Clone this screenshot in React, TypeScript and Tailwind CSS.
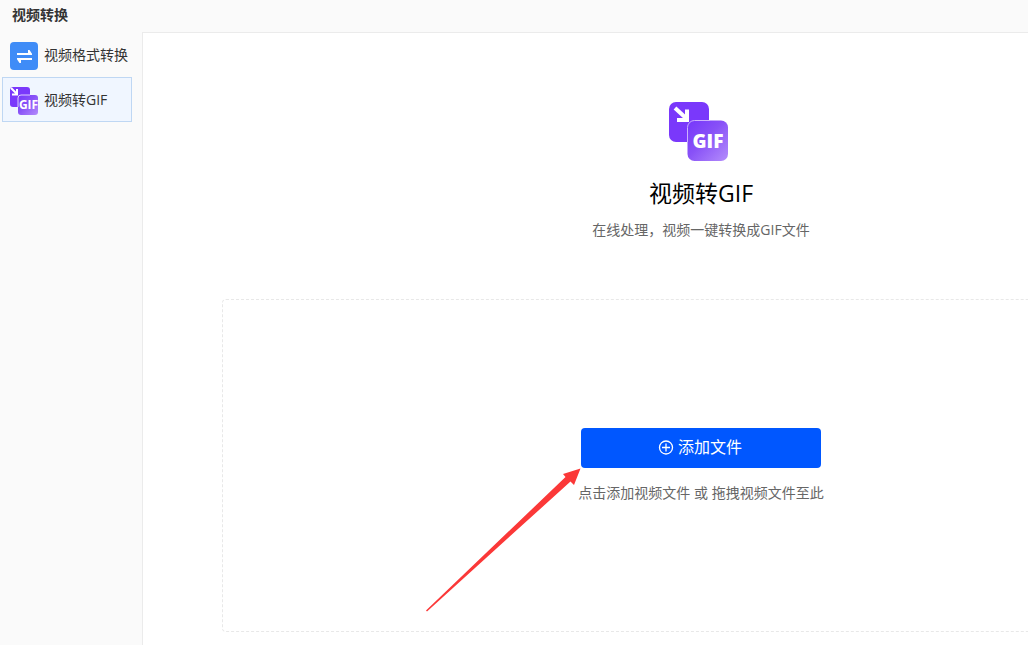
import { useRef, useState } from "react";

type Tool = "format" | "gif";

export default function App() {
  const [tool, setTool] = useState<Tool>("gif");

  return (
    <div className="flex min-h-screen flex-col overflow-hidden bg-[#fafafa] font-['Open_Sans','Noto_Sans_CJK_SC',sans-serif] text-sm text-[#333]">
      <header className="flex h-8 items-center px-3 pb-0.5">
        <h1 className="font-semibold leading-5">视频转换</h1>
      </header>
      <div className="flex flex-1">
        <nav className="w-[142px] shrink-0 pl-0.5 pr-2.5">
          <NavItem label="视频格式转换" active={tool === "format"} onClick={() => setTool("format")}>
            <ConvertIcon />
          </NavItem>
          <NavItem label="视频转GIF" active={tool === "gif"} onClick={() => setTool("gif")}>
            <SmallGifIcon />
          </NavItem>
        </nav>
        <GifPanel />
      </div>
    </div>
  );
}

function NavItem({
  label,
  active,
  onClick,
  children,
}: {
  label: string;
  active: boolean;
  onClick: () => void;
  children: React.ReactNode;
}) {
  return (
    <button
      type="button"
      onClick={onClick}
      className={`flex h-[45px] w-full items-center gap-1.5 whitespace-nowrap border pl-[7px] pt-[3px] leading-[22px] ${
        active ? "border-[#bfd7f3] bg-[#f0f6ff]" : "border-transparent"
      }`}
    >
      {children}
      <span className="pb-0.5">{label}</span>
    </button>
  );
}

function GifPanel() {
  const input = useRef<HTMLInputElement>(null);

  return (
    <main className="flex min-w-[1117px] flex-1 flex-col border-l border-t border-[#ebebeb] bg-white px-[79px] pb-[13px]">
      <div className="flex flex-col items-center pt-[69px]">
        <GifIcon />
        <h2 className="mt-[15px] text-[23px] leading-8 text-black">视频转GIF</h2>
        <p className="mt-[11px] leading-5 text-[#666]">在线处理，视频一键转换成GIF文件</p>
      </div>
      <section className="mt-[59px] flex flex-1 flex-col items-center justify-center rounded border border-dashed border-[#e8e8e8] py-10">
        <div className="relative">
          <button
            type="button"
            onClick={() => input.current?.click()}
            className="flex h-10 w-60 items-center justify-center gap-1 rounded bg-[#0057ff] pb-px pr-0.5 text-base text-white"
          >
            <PlusIcon />
            添加文件
          </button>
          <Arrow />
        </div>
        <input ref={input} type="file" accept="video/*" aria-label="添加文件" className="hidden" />
        <p className="mt-[15px] pb-px leading-5 text-[#666]">点击添加视频文件 或 拖拽视频文件至此</p>
      </section>
    </main>
  );
}

function ConvertIcon() {
  return (
    <svg viewBox="0 0 28 28" className="size-7 shrink-0" aria-hidden="true">
      <rect width="28" height="28" rx="4" fill="#3f8cf7" />
      <path d="M7 11h11V8h1.500l2.500 3.800V13H7zM22 16H7v1.200L9.500 21H11v-3h11z" fill="#fff" />
    </svg>
  );
}

function GifIcon() {
  return (
    <svg viewBox="0 0 64 60" className="h-[60px] w-16" aria-hidden="true">
      <defs>
        <linearGradient id="gif-front" x1="0" y1="0" x2="1" y2="1">
          <stop offset="0" stopColor="#7636fb" />
          <stop offset="0.45" stopColor="#8851f7" />
          <stop offset="1" stopColor="#b48dfb" />
        </linearGradient>
      </defs>
      <rect width="40" height="40" rx="7" fill="#7a38fb" />
      <path d="M6 6 18 17" stroke="#fff" strokeWidth="4" />
      <path d="M18 7.500v10.500H8" fill="none" stroke="#fff" strokeWidth="4" />
      <rect x="18.5" y="18.500" width="40.500" height="40.500" rx="7" fill="url(#gif-front)" />
      <path d="M18.500 40V25.500a7 7 0 0 1 7-7H41" fill="none" stroke="#cdb2fd" />
      <text
        x="39"
        y="46"
        textAnchor="middle"
        fill="#fff"
        fontSize="19"
        fontWeight="800"
        className="font-['Open_Sans',sans-serif]"
      >
        GIF
      </text>
    </svg>
  );
}

function SmallGifIcon() {
  return (
    <svg viewBox="0 0 28 28" className="size-7 shrink-0" aria-hidden="true">
      <defs>
        <linearGradient id="gif-front-small" x1="0" y1="0" x2="1" y2="1">
          <stop offset="0" stopColor="#7636fb" />
          <stop offset="0.45" stopColor="#8851f7" />
          <stop offset="1" stopColor="#b48dfb" />
        </linearGradient>
      </defs>
      <rect width="20" height="20" rx="3" fill="#7a38fb" />
      <path d="M1 1l6 6M7 2v5.500H2" fill="none" stroke="#fff" strokeWidth="2" />
      <rect x="8" y="8" width="20" height="20" rx="3" fill="url(#gif-front-small)" />
      <path d="M8 20v-9a3 3 0 0 1 3-3h9" fill="none" stroke="#dccbfe" />
      <text
        x="18.500"
        y="22"
        textAnchor="middle"
        fill="#fff"
        fontSize="12"
        fontWeight="700"
        className="font-['Open_Sans',sans-serif]"
      >
        GIF
      </text>
    </svg>
  );
}

function PlusIcon() {
  return (
    <svg viewBox="0 0 16 16" className="size-4" fill="none" stroke="currentColor" strokeWidth="1.3" aria-hidden="true">
      <circle cx="8" cy="8.500" r="6.500" />
      <path d="M8 4.500v8M4 8.500h8" />
    </svg>
  );
}

// Points from the lower left at the corner of the add button.
function Arrow() {
  return (
    <svg
      viewBox="0 0 156 144"
      className="pointer-events-none absolute right-full top-full h-36 w-[156px]"
      aria-hidden="true"
    >
      <path d="M155.500 0.500 149 17 145.500 13.500 2 143.500 1 142.500 140.500 9 138 6Z" fill="#fb3838" />
    </svg>
  );
}
